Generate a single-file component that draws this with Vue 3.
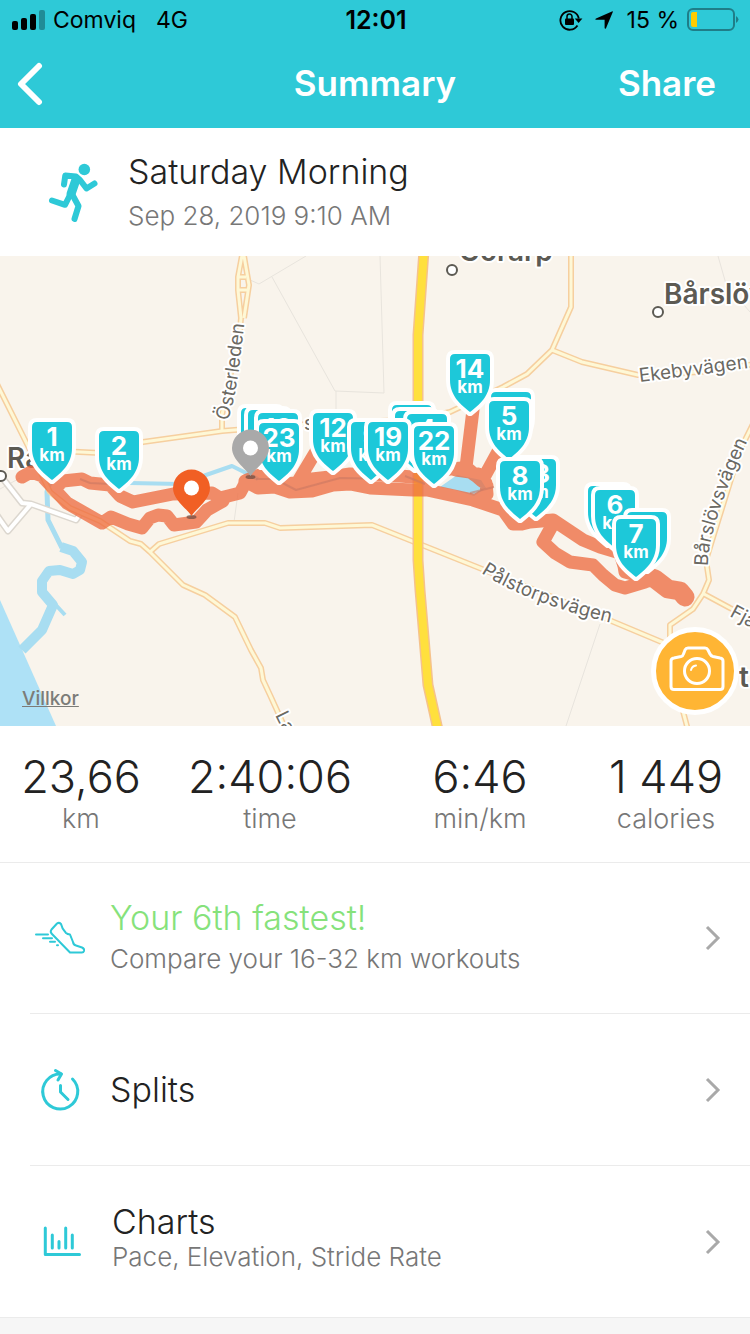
<template>
  <div class="summary-page">
    <header class="top">
      <!-- Status bar -->
      <div class="status-bar">
        <div class="status-left">
          <svg class="signal" viewBox="0 0 33 20" aria-hidden="true">
            <rect x="0" y="11" width="6" height="9" rx="2" />
            <rect x="9" y="8" width="6" height="12" rx="2" />
            <rect x="18" y="4" width="6" height="16" rx="2" />
            <rect x="27" y="0" width="6" height="20" rx="2" opacity="0.3" />
          </svg>
          <span>Comviq</span>
          <span class="network">4G</span>
        </div>
        <span class="clock">12:01</span>
        <div class="status-right">
          <svg class="lock" viewBox="0 0 24 22" aria-hidden="true">
            <path d="M18.5 16.5A9.3 9.3 0 1 1 19.8 9.5" fill="none" stroke="#000" stroke-width="1.8" />
            <path d="M15.8 9.5h7.6l-3.8 4.6z" />
            <rect x="6" y="9.5" width="9" height="6.5" rx="1" />
            <path d="M8 10V7.5a2.5 2.5 0 0 1 5 0V10" fill="none" stroke="#000" stroke-width="1.5" />
          </svg>
          <svg class="arrow" viewBox="0 0 18 18" aria-hidden="true">
            <path d="M17.5.3Q18 .2 17.8 1L11 17.2Q10 18.5 9.6 17V8.8H1Q-.5 8.4 1 7.4z" />
          </svg>
          <span>15 %</span>
          <svg class="battery" viewBox="0 0 53 24" aria-hidden="true">
            <rect x="1" y="1" width="46" height="21" rx="5" fill="none" stroke="#1f7d88" stroke-width="2" />
            <path d="M49 8q5 3.5 0 7z" fill="#1f7d88" />
            <path d="M6 4h4v15H6q-2 0-2-2V6q0-2 2-2z" fill="#fc0" />
          </svg>
        </div>
      </div>

      <!-- Navigation -->
      <nav class="nav-bar">
        <button type="button" class="back" aria-label="Back">
          <svg viewBox="0 0 28 44" aria-hidden="true"><path d="M23 4 5 22l18 18" /></svg>
        </button>
        <h1>Summary</h1>
        <button type="button" class="share">Share</button>
      </nav>
    </header>

    <!-- Workout title -->
    <section class="workout">
      <svg class="runner" viewBox="0 0 60 60" aria-hidden="true">
        <circle cx="41.3" cy="7.5" r="5.8" />
        <path d="M21 22.5 22.3 13.5 33 14.5 37 18 43.5 26.5 51.5 21.5" />
        <path d="M27 33 22 42.8 9 38.5" />
        <path d="M29 32 35.5 44 31.5 57" />
        <path class="torso" d="M33 17.5 28 32" />
      </svg>
      <div class="workout-text">
        <h2>Saturday Morning</h2>
        <p>Sep 28, 2019 9:10 AM</p>
      </div>
    </section>

    <!-- Map -->
    <section class="map">
      <svg class="map-canvas" viewBox="0 256 750 470" preserveAspectRatio="xMidYMid slice">
        <defs>
          <path id="osterleden" d="M228 421Q237 392 241 352L245 318" />
          <path id="ekeby" d="M640 382Q690 376 748 368" />
          <path id="barslovs" d="M708 566Q707 530 748 440" />
          <path id="palstorps" d="M481 573Q530 604 612 623" />
        </defs>

        <!-- Water -->
        <path d="M0 600 56 726H0z" fill="#aee1f6" />
        <g class="water">
          <path d="M50 482 47 492 48 520 62 548" stroke-width="5" />
          <path d="M61 547 73 551 82 562 80 570 73 574 60 570 49 571 42 581 42 592 53 605 42 630 22 650" stroke-width="10" />
          <path d="M54 603 65 615" stroke-width="4" />
          <path d="M130 483 180 484 232 466 258 479" stroke-width="4" />
        </g>
        <path d="M440 487 457 475 481 480 486 488 474 496 455 490z" fill="#a8ddf1" />

        <!-- Minor roads -->
        <g class="track">
          <path d="M248 279 259 284 306 256" />
          <path d="M272 277 335 391 384 393 380 256M336 391V430" />
          <path d="M600 624 566 726M238 493 234 522M718 256 726 284 750 312M0 489 20 478" />
        </g>
        <g class="white-casing"><path v-for="d in whiteRoads" :key="d" :d="d" /></g>
        <g class="white-road"><path v-for="d in whiteRoads" :key="d" :d="d" /></g>
        <g class="road-casing"><path v-for="d in roads" :key="d" :d="d" /></g>
        <g class="road"><path v-for="d in roads" :key="d" :d="d" /></g>
        <path class="highway-casing" :d="highway" />
        <path class="highway" :d="highway" />

        <!-- Place and street names -->
        <g class="place">
          <text x="459" y="261">Görarp</text>
          <text x="664" y="304">Bårslöv</text>
          <text x="7" y="468">Råå</text>
          <text x="739" y="687">t</text>
        </g>
        <g class="town-dot">
          <circle cx="452" cy="270" r="5" />
          <circle cx="658" cy="312" r="5" />
          <circle cx="1" cy="476" r="5" />
        </g>
        <g class="street">
          <text><textPath href="#osterleden">Österleden</textPath></text>
          <text><textPath href="#ekeby">Ekebyvägen</textPath></text>
          <text><textPath href="#barslovs">Bårslövsvägen</textPath></text>
          <text><textPath href="#palstorps">Pålstorpsvägen</textPath></text>
          <text transform="translate(729 616) rotate(28)">Fjä</text>
          <text transform="translate(275 715) rotate(64)">La</text>
          <text x="304" y="430">s</text>
        </g>

        <!-- Route -->
        <g class="route">
          <path v-for="d in route" :key="d" :d="d" />
          <path class="route-end" d="M646 576 655 579 668 589 680 591 685 597" />
        </g>
        <path class="stream" d="M80 479 90 483 110 484M256 479 275 479 296 490 340 478 395 479M405 476 425 484M470 493 494 487" />

        <!-- Kilometre markers -->
        <g v-for="(pin, i) in pins" :key="i" :transform="`translate(${pin.x} ${pin.y})`" class="pin">
          <path d="M-15 0H15Q20 0 20 5V26C20 42 9 51 0 58C-9 51-20 42-20 26V5Q-20 0-15 0z" />
          <template v-if="pin.km">
            <text class="pin-number" y="24">{{ pin.km }}</text>
            <text class="pin-unit" y="39">km</text>
          </template>
        </g>

        <!-- Start and finish -->
        <g v-for="spot in spots" :key="spot.color" :transform="`translate(${spot.x} ${spot.y})`">
          <ellipse cx="0" cy="29" rx="5" ry="2" fill="#6b4a40" opacity="0.7" />
          <path d="M0 28C-5 20-18.5 12-18.5 0A18.5 18.5 0 0 1 18.5 0C18.5 12 5 20 0 28z" :fill="spot.color" />
          <circle r="7.5" fill="#fff" />
        </g>
      </svg>

      <a href="#legal" class="legal">Villkor</a>
      <button type="button" class="camera" aria-label="Add photo">
        <svg viewBox="0 0 60 60" aria-hidden="true">
          <path d="M9 48.5Q6 48.5 6 45.5V20Q6 17.5 9 17L16 15.5Q18 15 18.5 13L20 9Q21 7 23 7H40Q42 7 43 9L45 13Q46 15 48 15.5L55 17Q58 17.5 58 20V45.5Q58 48.5 55 48.5z" />
          <circle cx="32" cy="30" r="12.5" />
          <path d="M26 29Q27 25 31 24.5" class="glint" />
        </svg>
      </button>
    </section>

    <!-- Totals -->
    <dl class="stats">
      <div v-for="stat in stats" :key="stat.label" class="stat">
        <dd>{{ stat.value }}</dd>
        <dt>{{ stat.label }}</dt>
      </div>
    </dl>

    <!-- Detail links -->
    <ul class="rows">
      <li>
        <a href="#compare" class="row">
          <svg class="row-icon" viewBox="0 0 60 60" aria-hidden="true">
            <path d="M27 15.5Q29 14 31 16Q32 21 36 25Q37.5 26.3 40 26.5L43 34Q43.5 37 46 37.5L52 39.5Q54.5 40.5 54 43Q53.5 44.5 52 44.5H40L21.5 25.5Q20 23.5 21.5 21.5z" />
            <path d="M6 26.5H18M13 30.3H22M20 33.7H25M27 37.3H28" />
          </svg>
          <div class="row-text spaced">
            <span class="row-title green">Your 6th fastest!</span>
            <span class="row-sub">Compare your 16-32 km workouts</span>
          </div>
          <svg class="chevron" viewBox="0 0 16 26" aria-hidden="true"><path d="M2 2 13 13 2 24" /></svg>
        </a>
      </li>
      <li>
        <a href="#splits" class="row">
          <svg class="row-icon" viewBox="0 0 60 60" aria-hidden="true">
            <path d="M42.5 19A17.5 17.5 0 1 1 31 14" />
            <path d="M25.5 10.5 31.5 14 28 20M30.5 25.5V32L38 39.5" />
          </svg>
          <div class="row-text">
            <span class="row-title">Splits</span>
          </div>
          <svg class="chevron" viewBox="0 0 16 26" aria-hidden="true"><path d="M2 2 13 13 2 24" /></svg>
        </a>
      </li>
      <li>
        <a href="#charts" class="row">
          <svg class="row-icon" viewBox="0 0 60 60" aria-hidden="true">
            <path d="M15.3 16V42.5H49.5M22.3 23V36M29 29.5V36M35.7 16V36M42.3 23V36" />
          </svg>
          <div class="row-text tight">
            <span class="row-title">Charts</span>
            <span class="row-sub">Pace, Elevation, Stride Rate</span>
          </div>
          <svg class="chevron" viewBox="0 0 16 26" aria-hidden="true"><path d="M2 2 13 13 2 24" /></svg>
        </a>
      </li>
    </ul>
    <div class="page-end"></div>
  </div>
</template>

<script setup>
import { ref } from 'vue'

const stats = ref([
  { value: '23,66', label: 'km' },
  { value: '2:40:06', label: 'time' },
  { value: '6:46', label: 'min/km' },
  { value: '1 449', label: 'calories' }
])

// Later markers are drawn on top of earlier ones
const pins = ref([
  { km: 1, x: 52, y: 422 },
  { km: 2, x: 119, y: 431 },
  { km: '', x: 261, y: 408 },
  { km: '', x: 268, y: 410 },
  { km: 18, x: 278, y: 413 },
  { km: 23, x: 279, y: 423 },
  { km: 12, x: 333, y: 413 },
  { km: '', x: 412, y: 405 },
  { km: '', x: 415, y: 411 },
  { km: 4, x: 427, y: 414 },
  { km: 9, x: 371, y: 422 },
  { km: 19, x: 388, y: 422 },
  { km: 22, x: 434, y: 426 },
  { km: 14, x: 470, y: 354 },
  { km: '', x: 511, y: 392 },
  { km: 5, x: 509, y: 401 },
  { km: 13, x: 536, y: 459 },
  { km: 8, x: 520, y: 461 },
  { km: '', x: 608, y: 486 },
  { km: 6, x: 615, y: 490 },
  { km: '', x: 647, y: 512 },
  { km: 7, x: 636, y: 519 }
])

const spots = ref([
  { x: 191.5, y: 488, color: '#f15f24' },
  { x: 250.5, y: 448, color: '#a9a9a9' }
])

const highway = 'M424 250 418 335V560L420 590 428 685 438 730'

const roads = [
  'M-4 382 28 446 50 492 70 508 100 521 130 541 141 544 150 552 183 585 205 595 235 617 251 650 261 668 263 680 270 695 286 730',
  'M60 451 100 453 143 442 222 431 320 423 410 420 450 412 503 387 527 374 552 350 571 307V250',
  'M552 350 582 362 638 375 700 372 755 364',
  'M222 431V415L240 330 241 318 238 290V277L243 250 249 285 244 318M238 277H246M238 290H248',
  'M150 552 159 544 228 523H265L280 528 372 525 482 569 590 612 664 643',
  'M755 420 740 450 706 560 709 580 703 594 693 609 670 625V640L680 700 688 730',
  'M704 594 730 608 755 620'
]

const whiteRoads = [
  'M4 480 22 503 31 504 76 520 80 514',
  'M31 504 8 531-4 514'
]

const route = [
  'M22 477 31 472 42 476 55 490 67 503 88 515 102 523 111 517 128 524 142 528 150 518 158 515 167 516 174 525 196 522 207 510 223 501',
  'M55 488 63 481 82 479 90 483 110 485 120 496 133 502 173 494 212 493 220 498 240 493 247 480 262 474',
  'M245 481 258 488 275 487 290 492 312 491 333 485 350 484 370 488 413 490 427 490 473 500 503 510 513 524 522 524 530 522 553 520 583 540 600 547 620 553 624 566 625 572 636 575 653 578 670 590',
  'M262 477 280 484 297 483 315 453M303 480 330 477 350 474 400 476 425 478 440 470 462 468',
  'M473 410 466 467 482 481 499 450M456 470 470 472 486 483 487 494 478 499M478 474 487 486',
  'M553 524 543 542 555 553 570 562 593 565 603 575 615 585 625 588 645 582 655 578'
]
</script>

<style>
body {
  margin: 0;
}
</style>

<style scoped>
.summary-page {
  display: flex;
  flex-direction: column;
  min-height: 100vh;
  background: #fff;
  color: #222;
  font-family: Inter, "Noto Sans", sans-serif;
  font-weight: 300;
}

h1,
h2,
p,
dl,
dd,
ul {
  margin: 0;
  padding: 0;
}

button {
  padding: 0;
  border: 0;
  background: none;
  font-family: inherit;
  cursor: pointer;
}

/* Header */
.top {
  background: #2ec9d7;
}

.status-bar {
  display: grid;
  grid-template-columns: 1fr auto 1fr;
  align-items: center;
  height: 40px;
  padding: 0 10px 0 12px;
  color: #000;
  font-size: 23px;
  font-weight: 400;
}

.status-left,
.status-right {
  display: flex;
  align-items: center;
  gap: 8px;
}

.status-right {
  justify-content: flex-end;
}

.signal {
  width: 33px;
  height: 20px;
}

.network {
  margin-left: 12px;
}

.clock {
  font-size: 25px;
  font-weight: 600;
}

.lock {
  width: 24px;
  height: 22px;
}

.arrow {
  width: 18px;
  height: 18px;
  margin: 0 6px 0 4px;
}

.battery {
  width: 53px;
  height: 24px;
}

.nav-bar {
  display: grid;
  grid-template-columns: 1fr auto 1fr;
  align-items: center;
  height: 88px;
  padding: 0 16px;
  color: #fff;
}

.back {
  justify-self: start;
  width: 28px;
  height: 44px;
}

.back svg {
  display: block;
  fill: none;
  stroke: #fff;
  stroke-width: 6;
  stroke-linecap: round;
  stroke-linejoin: round;
}

h1,
.share {
  padding-bottom: 2px;
  color: #fff;
  font-size: 35px;
  font-weight: 600;
}

.share {
  justify-self: end;
  margin-right: 18px;
}

/* Workout title */
.workout {
  display: flex;
  align-items: center;
  gap: 25px;
  height: 128px;
  padding: 0 43px;
}

.runner {
  width: 60px;
  height: 60px;
  fill: none;
  stroke: #2ec9d7;
  stroke-width: 6;
  stroke-linecap: round;
  stroke-linejoin: round;
}

.runner circle {
  fill: #2ec9d7;
  stroke: none;
}

.runner .torso {
  stroke-width: 9;
}

.workout-text h2 {
  font-size: 34px;
  line-height: 40px;
  font-weight: 300;
}

.workout-text p {
  margin-top: 8px;
  color: #777;
  font-size: 26px;
  line-height: 32px;
}

/* Map */
.map {
  position: relative;
  height: 470px;
  overflow: hidden;
  background: #f9f4ec;
}

.map-canvas {
  display: block;
  width: 100%;
  height: 100%;
}

.water,
.track,
.road,
.road-casing,
.white-road,
.white-casing,
.highway,
.highway-casing,
.route,
.stream {
  fill: none;
  stroke-linejoin: round;
}

.water {
  stroke: #a8ddf1;
}

.track {
  stroke: #e8e4dd;
  stroke-width: 1;
}

.white-casing {
  stroke: #dcd7cf;
  stroke-width: 7;
}

.white-road {
  stroke: #fff;
  stroke-width: 4;
}

.road-casing {
  stroke: #f6cf9f;
  stroke-width: 6;
}

.road {
  stroke: #fef8d6;
  stroke-width: 3;
}

.highway-casing {
  stroke: #f5c28c;
  stroke-width: 11;
}

.highway {
  stroke: #ffe03d;
  stroke-width: 8;
}

.place,
.street {
  fill: #5c5a53;
  stroke: #fff;
  stroke-width: 4;
  stroke-linejoin: round;
  paint-order: stroke;
}

.place {
  font-size: 28px;
  font-weight: 600;
}

.street {
  fill: #6b6963;
  font-size: 19px;
  font-weight: 400;
}

.town-dot {
  fill: #fff;
  stroke: #5c5a53;
  stroke-width: 2;
}

.route {
  stroke: #ee693d;
  stroke-width: 13;
  stroke-linecap: round;
  opacity: 0.75;
}

.route-end {
  stroke-width: 19;
}

.stream {
  stroke: #c97863;
  stroke-width: 2;
  opacity: 0.6;
}

.pin path {
  fill: #1dc8d9;
  stroke: #fff;
  stroke-width: 8;
  stroke-linejoin: round;
  paint-order: stroke;
}

.pin text {
  fill: #fff;
  text-anchor: middle;
  font-weight: 700;
}

.pin-number {
  font-size: 26px;
}

.pin-unit {
  font-size: 17px;
}

.legal {
  position: absolute;
  left: 22px;
  bottom: 15px;
  color: #7c7c78;
  font-size: 19px;
  line-height: 24px;
  font-weight: 500;
}

.camera {
  position: absolute;
  right: 11px;
  bottom: 11px;
  display: flex;
  align-items: center;
  justify-content: center;
  width: 88px;
  height: 88px;
  border: 5px solid #fff;
  border-radius: 50%;
  background: #ffb534;
}

.camera svg {
  flex: none;
  width: 60px;
  height: 60px;
  fill: none;
  stroke: #fff;
  stroke-width: 3;
  stroke-linecap: round;
}

.camera .glint {
  stroke-width: 2;
}

/* Totals */
.stats {
  display: grid;
  grid-template-columns: 162fr 216fr 204fr 168fr;
  height: 136px;
  text-align: center;
}

.stat {
  display: flex;
  flex-direction: column;
  padding-top: 26px;
}

.stat dd {
  font-size: 45px;
  line-height: 50px;
}

.stat dt {
  color: #777;
  font-size: 27px;
  line-height: 34px;
}

/* Detail links */
.rows {
  border-top: 1px solid #ebebeb;
  list-style: none;
}

.rows li {
  margin-left: 30px;
  border-bottom: 1px solid #ebebeb;
}

.rows li:last-child {
  margin-left: 0;
  padding-left: 30px;
}

.row {
  display: flex;
  align-items: center;
  height: 150px;
  padding-right: 29px;
  color: inherit;
  text-decoration: none;
}

.rows li + li .row {
  height: 151px;
}

.row-icon {
  flex: none;
  width: 60px;
  height: 60px;
  margin-right: 20px;
  fill: none;
  stroke: #2ec9d7;
  stroke-width: 2;
  stroke-linecap: round;
  stroke-linejoin: round;
}

.rows li + li .row-icon {
  stroke-width: 3;
}

.row-text {
  display: flex;
  flex: 1;
  flex-direction: column;
}

.row-text.spaced {
  gap: 5px;
  padding-bottom: 4px;
}

.row-text.tight {
  padding-bottom: 8px;
  padding-left: 2px;
}

.row-title {
  font-size: 34px;
  line-height: 40px;
}

.tight .row-title {
  line-height: 38px;
}

.green {
  color: #86e27b;
}

.row-sub {
  color: #777;
  font-size: 26px;
  line-height: 32px;
}

.chevron {
  width: 16px;
  height: 26px;
  fill: none;
  stroke: #a9a9a9;
  stroke-width: 3;
}

.page-end {
  flex: 1;
  background: #f6f6f6;
}
</style>
